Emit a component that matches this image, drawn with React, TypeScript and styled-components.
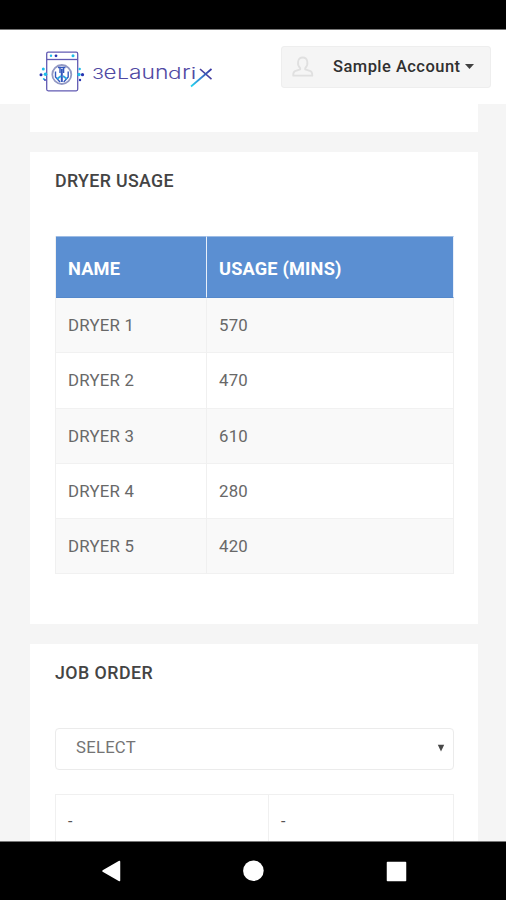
import React from 'react';
import styled, { createGlobalStyle } from 'styled-components';

const GlobalStyle = createGlobalStyle`
  *, *::before, *::after { box-sizing: border-box; }
  body { margin: 0; background: #f5f5f5; font-family: Roboto, "Liberation Sans", sans-serif; }
`;

const Screen = styled.div`
  display: flex;
  flex-direction: column;
  width: 506px;
  height: 900px;
  overflow: hidden;
  background: #f5f5f5;
`;

const StatusBar = styled.div`
  flex: none;
  height: 30px;
  background: #000;
  border-bottom: 1px solid #777;
`;

const Header = styled.header`
  flex: none;
  display: flex;
  justify-content: space-between;
  height: 74px;
  padding: 16px 15px 0 38px;
  background: #fff;
`;

const LogoArt = styled.svg`
  display: block;
  width: 180px;
  height: 50px;
`;

const AccountButton = styled.button`
  display: flex;
  align-items: center;
  width: 210px;
  height: 42px;
  padding: 0 0 1px 10px;
  border: 1px solid #eee;
  border-radius: 3px;
  background: #f5f5f5;
  color: #303030;
  font: 500 16.5px/20px Roboto, sans-serif;
  letter-spacing: 0.46px;
  white-space: nowrap;
`;

const UserIcon = styled.svg`
  flex: none;
  width: 22px;
  height: 22px;
  margin: 1px 19px 0 0;
`;

const Caret = styled.svg`
  width: 9px;
  height: 5px;
  margin-left: 4px;
`;

const Content = styled.main`
  flex: 1;
  display: flex;
  flex-direction: column;
  gap: 20px;
  min-height: 0;
  padding: 0 28px 0 30px;
  overflow: hidden;
`;

const Card = styled.section<{ $height: number }>`
  flex: none;
  height: ${({ $height }) => $height}px;
  padding: 0 24px 0 25px;
  background: #fff;
`;

const CardTitle = styled.h2<{ $tracking: number }>`
  height: 84px;
  margin: 0;
  padding-top: 18px;
  color: #444;
  font-size: 17.8px;
  font-weight: 500;
  line-height: 22px;
  letter-spacing: ${({ $tracking }) => $tracking}px;
`;

const Table = styled.table`
  width: 399px;
  border-collapse: separate;
  border-spacing: 0;
  table-layout: fixed;
  border-left: 1px solid #f0f0f0;
`;

const HeadCell = styled.th<{ $width: number }>`
  width: ${({ $width }) => $width}px;
  height: 62px;
  padding: 3px 12px 0;
  border-top: 1px solid #9dbce5;
  border-right: 1px solid #e8effa;
  border-bottom: 1px solid #5488cb;
  background: #5b8fd2;
  color: #fff;
  font-size: 18.2px;
  font-weight: 700;
  line-height: 22px;
  letter-spacing: 0.18px;
  text-align: left;
`;

const Row = styled.tr`
  &:nth-child(odd) { background: #f9f9f9; }
`;

const Cell = styled.td`
  height: 55.3px;
  padding: 0 12px;
  border-right: 1px solid #f0f0f0;
  border-bottom: 1px solid #f1f1f1;
  color: #686868;
  font-size: 16.8px;
  line-height: 20px;
  letter-spacing: 0.25px;
`;

const SelectBox = styled.button`
  display: flex;
  align-items: center;
  justify-content: space-between;
  width: 399px;
  height: 42px;
  margin: 0 0 24px;
  padding: 0 8px 2px 20px;
  border: 1px solid #ebebeb;
  border-radius: 4px;
  background: #fff;
  color: #747474;
  font: 400 16.7px/20px Roboto, sans-serif;
  letter-spacing: 0.25px;
`;

const SelectArrow = styled.svg`
  width: 8px;
  height: 8px;
`;

const OrderGrid = styled.div`
  display: grid;
  grid-template-columns: 212px 185px;
  width: 399px;
  height: 60px;
  border: 1px solid #f0f0f0;
`;

const OrderCell = styled.div`
  padding: 17px 12px;
  color: #555;
  font-size: 16px;
  line-height: 20px;
  & + & { border-left: 1px solid #f0f0f0; }
`;

const NavBar = styled.nav`
  flex: none;
  height: 59px;
  border-top: 1px solid #777;
  background: #000;
`;

const NavIcons = styled.svg`
  display: block;
  width: 506px;
  height: 58px;
`;

const dryers = [
  { name: 'DRYER 1', usage: 570 },
  { name: 'DRYER 2', usage: 470 },
  { name: 'DRYER 3', usage: 610 },
  { name: 'DRYER 4', usage: 280 },
  { name: 'DRYER 5', usage: 420 },
];

// Wordmark letters share one height, so lowercase forms are set larger.
const letters = [
  { char: '3', x: 92, width: 12, size: 15 },
  { char: 'e', x: 103.5, width: 13, size: 18.5 },
  { char: 'L', x: 117, width: 12, size: 14.5 },
  { char: 'a', x: 129, width: 12.5, size: 18.5 },
  { char: 'u', x: 141.5, width: 13.5, size: 18.5 },
  { char: 'n', x: 155, width: 13.5, size: 18.5 },
  { char: 'd', x: 168, width: 13.5, size: 16.5 },
  { char: 'r', x: 182, width: 8.5, size: 18.5 },
  { char: 'i', x: 190.5, width: 6, size: 15.5 },
];

function Logo() {
  return (
    <LogoArt viewBox="38 46 180 50" aria-label="3elaundrix">
      <defs>
        <linearGradient id="swoosh" x1="1" y1="0" x2="0" y2="1">
          <stop offset="0" stopColor="#3530a0" />
          <stop offset="0.5" stopColor="#347fd0" />
          <stop offset="1" stopColor="#20d8f0" />
        </linearGradient>
      </defs>
      <g fill="none" stroke="#625bb3" strokeWidth="1.3">
        <rect x="46.7" y="52.2" width="31" height="38.6" rx="1.5" />
        <path d="M47 59.5H77.5" />
        <circle cx="61.8" cy="74.5" r="9.5" stroke="#9298c3" strokeWidth="1.8" />
      </g>
      <g fill="none" stroke="#3458bd">
        <path d="M58 67.5h7.5M60 68v5M63.6 68v5" strokeWidth="1.4" />
        <path d="M61.8 69v13" strokeWidth="2" />
        <path d="M55.5 71.5v5.5l4.5 5M68.2 71.5v5.5l-4.5 5" strokeWidth="1.4" />
        <path d="M57 79l4-3M67 79l-4-3" stroke="#2aa8df" strokeWidth="1.8" />
      </g>
      <g fill="#20bde9">
        <circle cx="51" cy="55.8" r="1.2" />
        <circle cx="73" cy="55.8" r="1.5" />
        <circle cx="43.3" cy="69" r="1.5" />
        <circle cx="45.5" cy="74.3" r="1.8" />
        <circle cx="43.8" cy="79" r="1" />
        <circle cx="79.7" cy="69" r="1.2" />
        <circle cx="79" cy="74.5" r="1.7" />
      </g>
      <g fill="#2633b2">
        <circle cx="56" cy="55.8" r="1.4" />
        <circle cx="41" cy="74.8" r="1.5" />
        <circle cx="82.5" cy="74.7" r="1.6" />
        <circle cx="80" cy="80" r="1.2" />
        <circle cx="45" cy="80" r="0.9" />
      </g>
      <g fill="#5049a3" fontFamily="Inter, sans-serif" fontWeight="300">
        {letters.map(({ char, x, width, size }) => (
          <text key={char} x={x} y="79" fontSize={size} textLength={width} lengthAdjust="spacingAndGlyphs">{char}</text>
        ))}
      </g>
      <path d="M200 69l11.5 10.2" stroke="#4640a0" strokeWidth="1.6" fill="none" />
      <path d="M211.5 69L191 86.5" stroke="url(#swoosh)" strokeWidth="1.7" fill="none" />
    </LogoArt>
  );
}

export default function App() {
  return (
    <>
      <GlobalStyle />
      <Screen>
        <StatusBar />
        <Header>
          <Logo />
          <AccountButton>
            <UserIcon viewBox="0 0 22 22" fill="none" stroke="#e0e0e0" strokeWidth="1.8" strokeLinejoin="round">
              <path d="M8.2 12.2C4.7 8.7 5.3 1.5 10.7 1.5s6 7.2 2.5 10.7v1.2l5.3 1.8c1.5.6 1.8 2 1.8 4.5H1.2c0-2.5.3-3.9 1.8-4.5l5.2-1.8z" />
            </UserIcon>
            Sample Account
            <Caret viewBox="0 0 9 5"><path d="M0 0h9L4.5 5z" fill="#404040" /></Caret>
          </AccountButton>
        </Header>
        <Content>
          <Card $height={28} />
          <Card $height={472}>
            <CardTitle $tracking={0.35}>DRYER USAGE</CardTitle>
            <Table>
              <thead>
                <tr>
                  <HeadCell $width={151}>NAME</HeadCell>
                  <HeadCell $width={247}>USAGE (MINS)</HeadCell>
                </tr>
              </thead>
              <tbody>
                {dryers.map((dryer) => (
                  <Row key={dryer.name}>
                    <Cell>{dryer.name}</Cell>
                    <Cell>{dryer.usage}</Cell>
                  </Row>
                ))}
              </tbody>
            </Table>
          </Card>
          <Card $height={220}>
            <CardTitle $tracking={0.45}>JOB ORDER</CardTitle>
            <SelectBox>
              SELECT
              <SelectArrow viewBox="0 0 8 8"><path d="M.8.8h6.4L4 7.5z" fill="#484848" /></SelectArrow>
            </SelectBox>
            <OrderGrid>
              <OrderCell>-</OrderCell>
              <OrderCell>-</OrderCell>
            </OrderGrid>
          </Card>
        </Content>
        <NavBar>
          <NavIcons viewBox="0 842 506 58" fill="#fff" stroke="#fff" strokeLinejoin="round">
            <path d="M103 871l16.5-9.5v19z" strokeWidth="1.5" />
            <circle cx="253.4" cy="870.8" r="10.3" stroke="none" />
            <rect x="387.5" y="862.5" width="18" height="18" strokeWidth="1.5" />
          </NavIcons>
        </NavBar>
      </Screen>
    </>
  );
}
